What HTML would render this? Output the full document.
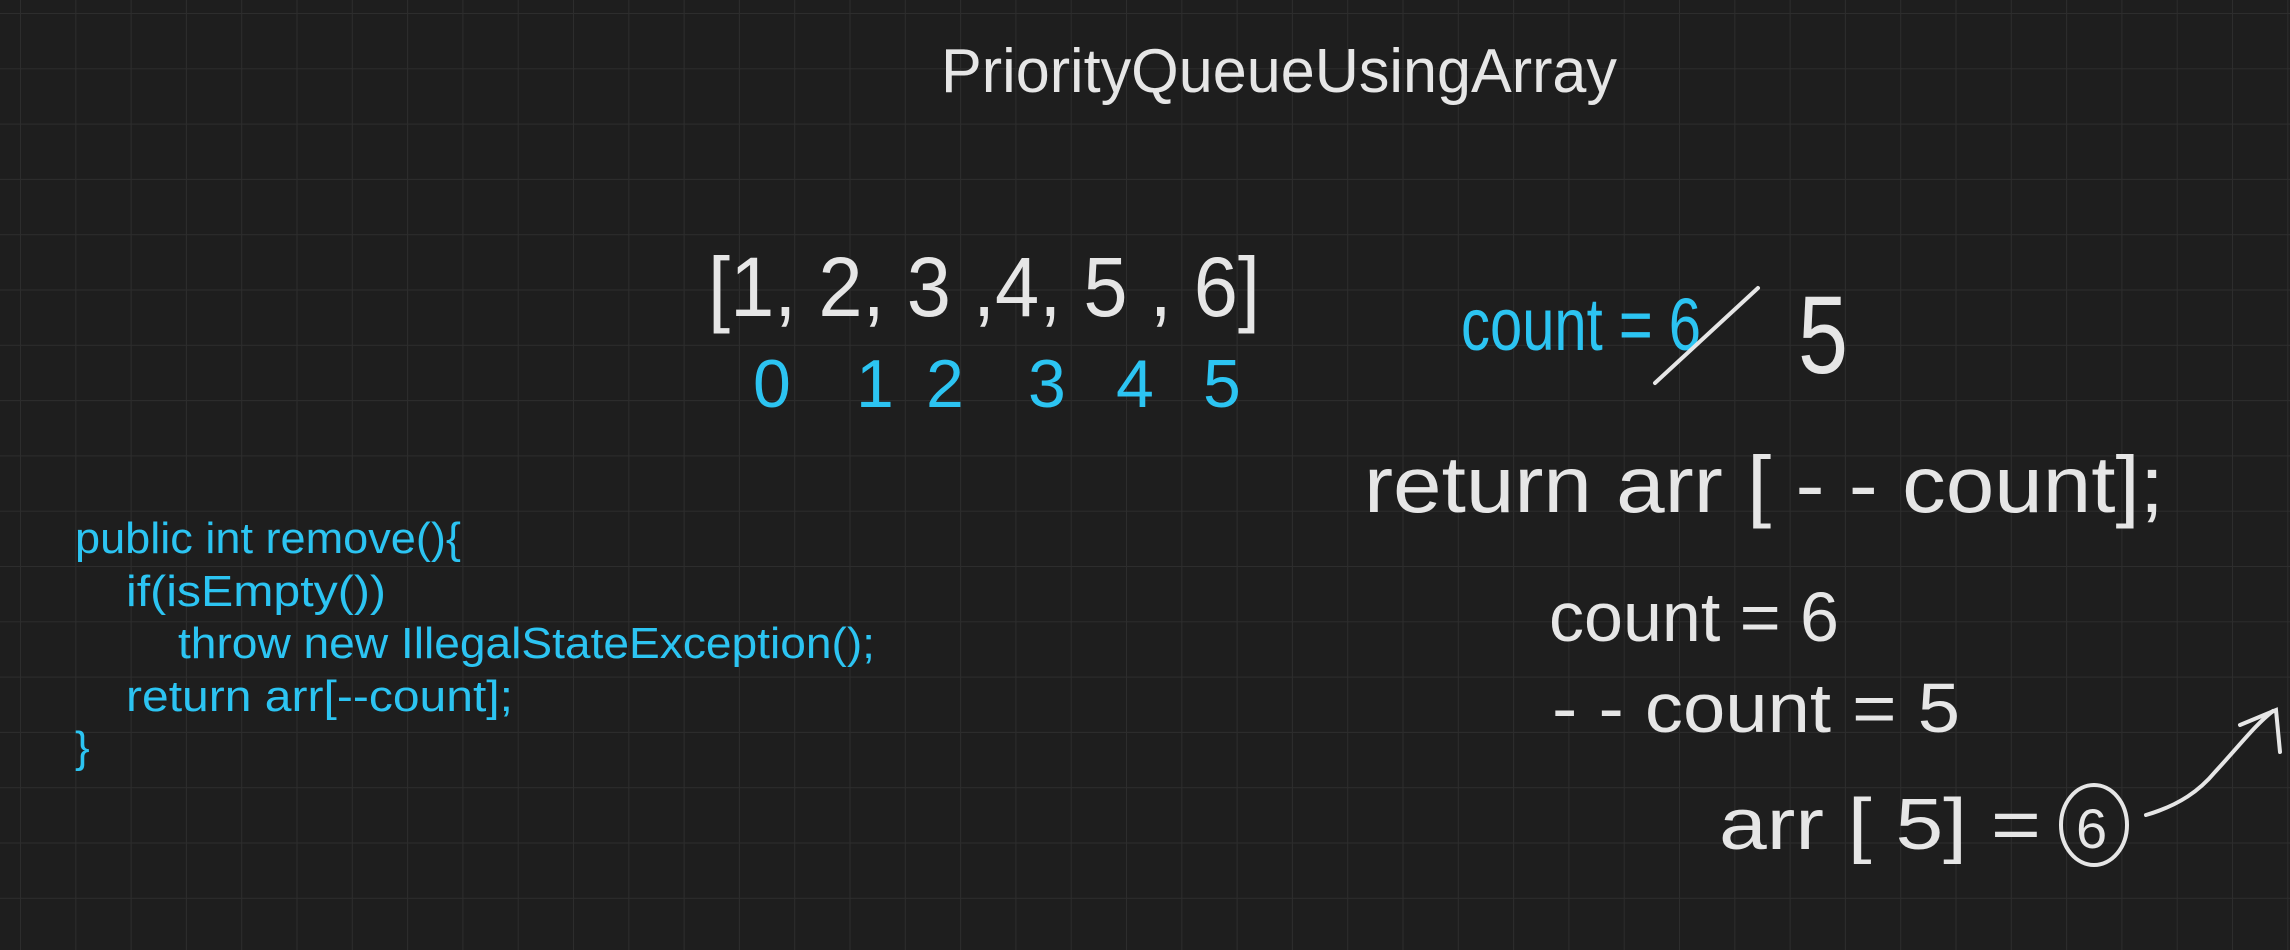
<!DOCTYPE html>
<html><head><meta charset="utf-8"><style>
html,body{margin:0;padding:0;background:#1e1e1e;}
body{width:2290px;height:950px;overflow:hidden;}
svg{display:block}
text{font-family:"Liberation Sans","DejaVu Sans",sans-serif;}
</style></head><body>
<svg width="2290" height="950" viewBox="0 0 2290 950" xmlns="http://www.w3.org/2000/svg">
<defs>
<pattern id="g" x="20" y="13" width="55.3" height="55.3" patternUnits="userSpaceOnUse">
<path d="M0 0H55.3M0 0V55.3" stroke="#2d2d2d" stroke-width="2" fill="none"/>
</pattern>
</defs>
<rect width="2290" height="950" fill="#1e1e1e"/>
<rect width="2290" height="950" fill="url(#g)"/>

<g fill="#e6e6e6">
<text x="941" y="92" font-size="62" textLength="676" lengthAdjust="spacingAndGlyphs">PriorityQueueUsingArray</text>
<text x="708" y="316" font-size="84" textLength="552" lengthAdjust="spacingAndGlyphs">[1, 2, 3 ,4, 5 , 6]</text>
<text x="1798" y="373" font-size="110" textLength="50" lengthAdjust="spacingAndGlyphs">5</text>
<text x="1364" y="512" font-size="80" textLength="800" lengthAdjust="spacingAndGlyphs">return arr [ - -  count];</text>
<text x="1549" y="641" font-size="70" textLength="290" lengthAdjust="spacingAndGlyphs">count  = 6</text>
<text x="1552" y="732" font-size="70" textLength="408" lengthAdjust="spacingAndGlyphs">- -  count  = 5</text>
<text x="1719" y="849" font-size="72" textLength="322" lengthAdjust="spacingAndGlyphs">arr [ 5]  =</text>
<text x="2076" y="848" font-size="56">6</text>
</g>

<g fill="#2cc4f2">
<text x="1461" y="350" font-size="74" textLength="240" lengthAdjust="spacingAndGlyphs">count  = 6</text>
<g font-size="68">
<text x="753" y="407">0</text>
<text x="856" y="407">1</text>
<text x="926" y="407">2</text>
<text x="1028" y="407">3</text>
<text x="1116" y="407">4</text>
<text x="1203" y="407">5</text>
</g>
<g font-size="44">
<text x="75" y="553" textLength="386" lengthAdjust="spacingAndGlyphs">public int remove(){</text>
<text x="126" y="606" textLength="260" lengthAdjust="spacingAndGlyphs">if(isEmpty())</text>
<text x="178" y="658" textLength="697" lengthAdjust="spacingAndGlyphs">throw new IllegalStateException();</text>
<text x="126" y="711" textLength="387" lengthAdjust="spacingAndGlyphs">return arr[--count];</text>
<text x="75" y="762">}</text>
</g>
</g>

<g stroke="#e6e6e6" stroke-width="4" fill="none" stroke-linecap="round">
<path d="M1655 383 L1758 288"/>
<ellipse cx="2094" cy="825" rx="33" ry="40"/>
<path d="M2146 815 C2180 805 2200 790 2215 772 C2240 745 2255 725 2273 711"/>
<path d="M2240 725 L2276 710 L2280 752"/>
</g>
</svg>
</body></html>
